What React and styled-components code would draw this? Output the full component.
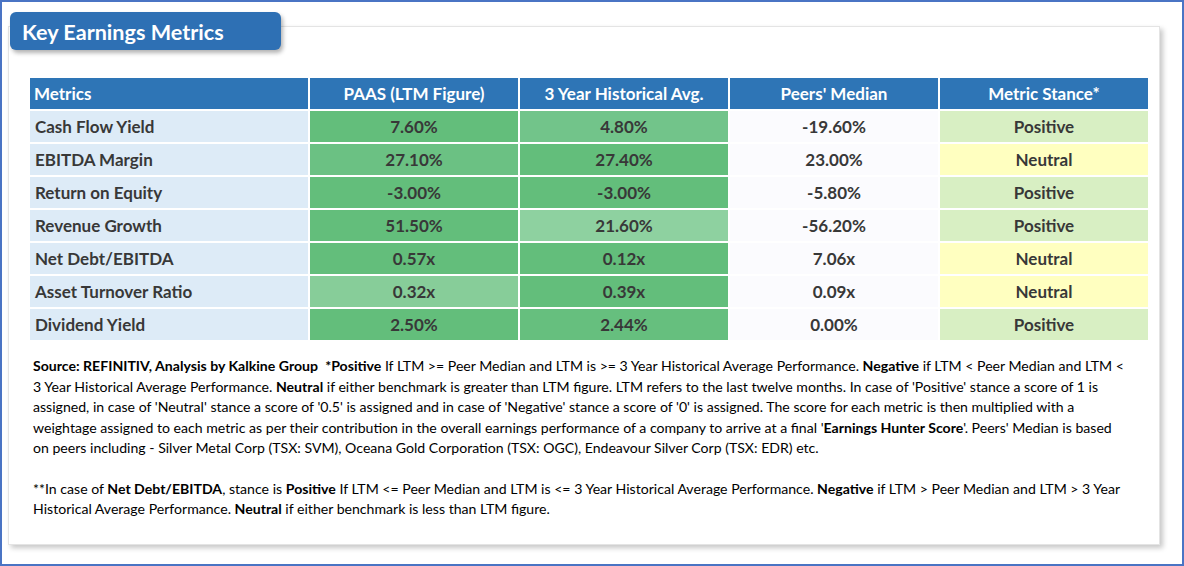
import styled, { createGlobalStyle } from 'styled-components';

const GlobalStyle = createGlobalStyle`
  html, body {
    margin: 0;
    padding: 0;
    background: #ffffff;
  }
  body {
    font-family: Lato, "Open Sans", sans-serif;
  }
`;

const Frame = styled.div`
  position: relative;
  width: 1184px;
  height: 566px;
  box-sizing: border-box;
  border: 2px solid #4a74c4;
  padding: 24px 0 0 6px;
`;

const Card = styled.div`
  width: 1152px;
  height: 519px;
  box-sizing: border-box;
  border: 1px solid #e4e4e4;
  box-shadow: 3px 3px 5px rgba(0, 0, 0, 0.22);
  padding: 51px 0 0 21px;
  background: #ffffff;
`;

const TitleTab = styled.div`
  position: absolute;
  left: 8px;
  top: 10px;
  width: 271px;
  height: 38px;
  box-sizing: border-box;
  background: #2e70b4;
  border-radius: 6px;
  box-shadow: 2px 3px 4px rgba(0, 0, 0, 0.3);
  color: #ffffff;
  font-weight: 700;
  font-size: 21.6px;
  line-height: 40px;
  padding-left: 12px;
`;

const Grid = styled.div`
  display: grid;
  grid-template-columns: 278px repeat(4, 208px);
  grid-auto-rows: 31px;
  gap: 2px;
`;

const HeadCell = styled.div`
  background: #2e75b6;
  color: #ffffff;
  font-weight: 700;
  font-size: 17px;
  display: flex;
  align-items: center;
  justify-content: ${(p) => (p.$left ? 'flex-start' : 'center')};
  padding-left: ${(p) => (p.$left ? '4px' : '0')};
`;

const Cell = styled.div`
  background: ${(p) => p.$bg};
  color: #383838;
  font-weight: 700;
  font-size: 17px;
  display: flex;
  align-items: center;
  justify-content: ${(p) => (p.$left ? 'flex-start' : 'center')};
  padding-left: ${(p) => (p.$left ? '5px' : '0')};
`;

const Notes = styled.div`
  margin-top: 16px;
  padding-left: 3px;
  font-size: 14.1px;
  line-height: 20.5px;
  color: #000000;
`;

const Para = styled.p`
  margin: 0 0 20px 0;
`;

const Line = styled.span`
  display: block;
  white-space: nowrap;
`;

const stanceBg = {
  Positive: '#d8efc3',
  Neutral: '#ffffc0',
};

const rows = [
  ['Cash Flow Yield', '7.60%', '#63be7b', '4.80%', '#72c48a', '-19.60%', 'Positive'],
  ['EBITDA Margin', '27.10%', '#6bc183', '27.40%', '#63be7b', '23.00%', 'Neutral'],
  ['Return on Equity', '-3.00%', '#63be7b', '-3.00%', '#63be7b', '-5.80%', 'Positive'],
  ['Revenue Growth', '51.50%', '#63be7b', '21.60%', '#8ed1a0', '-56.20%', 'Positive'],
  ['Net Debt/EBITDA', '0.57x', '#63be7b', '0.12x', '#63be7b', '7.06x', 'Neutral'],
  ['Asset Turnover Ratio', '0.32x', '#87cd99', '0.39x', '#63be7b', '0.09x', 'Neutral'],
  ['Dividend Yield', '2.50%', '#63be7b', '2.44%', '#66bf7e', '0.00%', 'Positive'],
];

export default function App() {
  return (
    <>
      <GlobalStyle />
      <Frame>
        <Card>
          <Grid>
            <HeadCell $left>Metrics</HeadCell>
            <HeadCell>PAAS (LTM Figure)</HeadCell>
            <HeadCell>3 Year Historical Avg.</HeadCell>
            <HeadCell>Peers' Median</HeadCell>
            <HeadCell>Metric Stance*</HeadCell>
            {rows.map(([name, ltm, ltmBg, hist, histBg, peers, stance]) => (
              <>
                <Cell key={name} $left $bg="#ddebf7">{name}</Cell>
                <Cell $bg={ltmBg}>{ltm}</Cell>
                <Cell $bg={histBg}>{hist}</Cell>
                <Cell $bg="#fbfbfe">{peers}</Cell>
                <Cell $bg={stanceBg[stance]}>{stance}</Cell>
              </>
            ))}
          </Grid>
          <Notes>
            <Para>
              <Line>
                <b>Source: REFINITIV, Analysis by Kalkine Group</b>&nbsp; <b>*Positive</b> If LTM &gt;= Peer Median and LTM is &gt;= 3 Year Historical Average Performance. <b>Negative</b> if LTM &lt; Peer Median and LTM &lt;
              </Line>
              <Line>
                3 Year Historical Average Performance. <b>Neutral</b> if either benchmark is greater than LTM figure. LTM refers to the last twelve months. In case of 'Positive' stance a score of 1 is
              </Line>
              <Line>
                assigned, in case of 'Neutral' stance a score of '0.5' is assigned and in case of 'Negative' stance a score of '0' is assigned. The score for each metric is then multiplied with a
              </Line>
              <Line>
                weightage assigned to each metric as per their contribution in the overall earnings performance of a company to arrive at a final '<b>Earnings Hunter Score</b>'. Peers' Median is based
              </Line>
              <Line>
                on peers including - Silver Metal Corp (TSX: SVM), Oceana Gold Corporation (TSX: OGC), Endeavour Silver Corp (TSX: EDR) etc.
              </Line>
            </Para>
            <Para>
              <Line>
                **In case of <b>Net Debt/EBITDA</b>, stance is <b>Positive</b> If LTM &lt;= Peer Median and LTM is &lt;= 3 Year Historical Average Performance. <b>Negative</b> if LTM &gt; Peer Median and LTM &gt; 3 Year
              </Line>
              <Line>
                Historical Average Performance. <b>Neutral</b> if either benchmark is less than LTM figure.
              </Line>
            </Para>
          </Notes>
        </Card>
        <TitleTab>Key Earnings Metrics</TitleTab>
      </Frame>
    </>
  );
}
